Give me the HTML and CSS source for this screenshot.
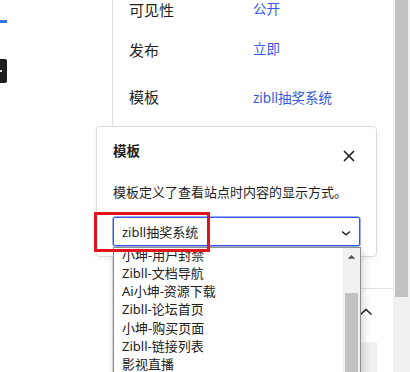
FILE: index.html
```html
<!DOCTYPE html>
<html lang="zh-CN">
<head>
<meta charset="utf-8">
<title>模板</title>
<link rel="stylesheet" href="styles.css">
</head>
<body>
<div class="screen">
  <div class="canvas">
    <div class="canvas-tab"></div>
    <div class="inserter"><span class="inserter-plus"></span></div>
  </div>

  <aside class="sidebar">
    <div class="row row-first">
      <span class="label">可见性</span>
      <a class="value" href="#">公开</a>
    </div>
    <div class="row row-second">
      <span class="label">发布</span>
      <a class="value" href="#">立即</a>
    </div>
    <div class="row row-third">
      <span class="label">模板</span>
      <a class="value" href="#">zibll抽奖系统</a>
    </div>
    <div class="sb-field"></div>
    <div class="panel">
      <div class="panel-head">
        <svg class="panel-chevron" width="24" height="24" viewBox="0 0 24 24" aria-hidden="true"><path d="M6.5 14.5 L12 9.5 L17.5 14.5" fill="none" stroke="#1e1e1e" stroke-width="1.5"/></svg>
      </div>
      <div class="panel-btn"></div>
    </div>
  </aside>

  <div class="page-scroll"><div class="page-thumb"></div></div>

  <div class="popover">
    <div class="pop-head">
      <h2 class="pop-title">模板</h2>
      <button class="pop-close" type="button" aria-label="关闭">
        <svg width="24" height="24" viewBox="0 0 24 24" aria-hidden="true"><path d="M7 7 L17 17 M17 7 L7 17" fill="none" stroke="#1e1e1e" stroke-width="1.6"/></svg>
      </button>
    </div>
    <p class="pop-desc">模板定义了查看站点时内容的显示方式。</p>
    <div class="select">
      <span class="select-text">zibll抽奖系统</span>
      <svg class="select-chevron" width="12" height="8" viewBox="0 0 12 8" aria-hidden="true"><path d="M2 2.5 L6 5.8 L10 2.5" fill="none" stroke="#1e1e1e" stroke-width="1.5"/></svg>
    </div>
  </div>

  <div class="dropdown">
    <ul class="options">
      <li>小坤-用户封禁</li>
      <li>Zibll-文档导航</li>
      <li>Ai小坤-资源下载</li>
      <li>Zibll-论坛首页</li>
      <li>小坤-购买页面</li>
      <li>Zibll-链接列表</li>
      <li>影视直播</li>
    </ul>
    <div class="dd-scroll">
      <svg class="dd-arrow" width="9" height="6" viewBox="0 0 9 6" aria-hidden="true"><path d="M0.5 5 L4.5 1 L8.5 5 Z" fill="#505050"/></svg>
      <div class="dd-thumb"></div>
    </div>
  </div>

  <div class="highlight"></div>
</div>
</body>
</html>
```
FILE: styles.css
```css
* { box-sizing: border-box; }
html, body { margin: 0; padding: 0; background: #fff; }
body {
  font-family: "Noto Sans", "Noto Sans CJK SC", sans-serif;
  color: #1e1e1e;
}
.screen {
  position: relative;
  width: 410px;
  height: 372px;
  overflow: hidden;
  display: flex;
  background: #fff;
}

/* left canvas fragment */
.canvas {
  width: 112px;
  flex: none;
  display: flex;
  flex-direction: column;
}
.canvas-tab {
  width: 7px;
  height: 3px;
  margin-top: 20px;
  background: #3a76e0;
}
.inserter {
  width: 7px;
  height: 24px;
  margin-top: 36px;
  background: #1e1e1e;
  border-radius: 0 2px 2px 0;
  display: flex;
  align-items: center;
}
.inserter-plus {
  width: 2px;
  height: 2px;
  background: #ddd;
}

/* sidebar */
.sidebar {
  width: 281px;
  flex: none;
  border-left: 1px solid #e0e0e0;
  display: flex;
  flex-direction: column;
}
.row {
  display: flex;
  align-items: center;
  height: 20px;
  padding: 0 16px;
}
.row-second { margin-top: 20px; }
.row-third { margin-top: 27px; }
.label {
  width: 124px;
  font-size: 15px;
  line-height: 20px;
}
.value {
  font-size: 13.5px;
  line-height: 20px;
  color: #3858e9;
  text-decoration: none;
}
.row-first .value, .row-second .value { margin-top: -2px; }
.row-third .value { margin-top: 2px; }
.sb-field {
  margin: 137px 16px 0;
  height: 28px;
  border: 1px solid #9a9a9a;
  border-radius: 2px;
}
.panel {
  margin-top: 34px;
  border-top: 1px solid #e0e0e0;
  display: flex;
  flex-direction: column;
}
.panel-head {
  display: flex;
  justify-content: flex-end;
  padding: 11px 15px 0 0;
}
.panel-chevron { display: block; }
.panel-btn {
  margin: 18px 16px 0;
  height: 30px;
  background: #f0f0f0;
}

/* page scrollbar */
.page-scroll {
  flex: none;
  width: 17px;
  background: #f1f1f1;
  padding-left: 2px;
}
.page-thumb {
  width: 13px;
  height: 297px;
  background: #c1c1c1;
}

/* popover */
.popover {
  position: absolute;
  left: 96px;
  top: 126px;
  width: 281px;
  height: 131px;
  background: #fff;
  border: 1px solid #dcdcdc;
  border-radius: 4px;
  box-shadow: 0 2px 6px rgba(0,0,0,0.06);
  padding: 14px 16px 10px;
  z-index: 2;
}
.pop-head {
  display: flex;
  justify-content: space-between;
  align-items: flex-start;
}
.pop-title {
  margin: 0;
  font-size: 13.5px;
  font-weight: 600;
  line-height: 21px;
}
.pop-close {
  margin: 3px -1px 0 0;
  padding: 0;
  width: 24px;
  height: 24px;
  border: 0;
  background: none;
  display: flex;
}
.pop-desc {
  margin: 14px 0 0;
  font-size: 13px;
  line-height: 20px;
  color: #1e1e1e;
}
.select {
  margin-top: 15px;
  height: 29px;
  border: 1px solid #3858e9;
  border-radius: 2px;
  box-shadow: 0 0 0 0.5px #3858e9;
  display: flex;
  align-items: center;
  justify-content: space-between;
  padding: 0 7px 0 8px;
}
.select-text {
  font-size: 13px;
  line-height: 20px;
  margin-top: 1px;
}
.select-chevron { display: block; margin-top: 2px; }

/* native dropdown list */
.dropdown {
  position: absolute;
  left: 113px;
  top: 247px;
  width: 248px;
  height: 140px;
  background: #fff;
  border: 1px solid #8f8f8f;
  box-shadow: 2px 3px 8px rgba(0,0,0,0.18);
  display: flex;
  overflow: hidden;
  z-index: 3;
}
.options {
  list-style: none;
  margin: -2.5px 0 0;
  padding: 0;
  flex: 1;
}
.options li {
  font-size: 13px;
  line-height: 18.3px;
  height: 18.3px;
  padding-left: 8px;
  color: #202020;
  white-space: nowrap;
}
.dd-scroll {
  width: 17px;
  flex: none;
  background: #f1f1f1;
  display: flex;
  flex-direction: column;
  align-items: center;
  padding-top: 6px;
}
.dd-arrow { display: block; }
.dd-thumb {
  margin-top: 33px;
  width: 13px;
  height: 100px;
  background: #c1c1c1;
}

/* annotation */
.highlight {
  position: absolute;
  left: 94px;
  top: 212px;
  width: 116px;
  height: 40px;
  border: 3px solid #e3131b;
  z-index: 4;
}
```
